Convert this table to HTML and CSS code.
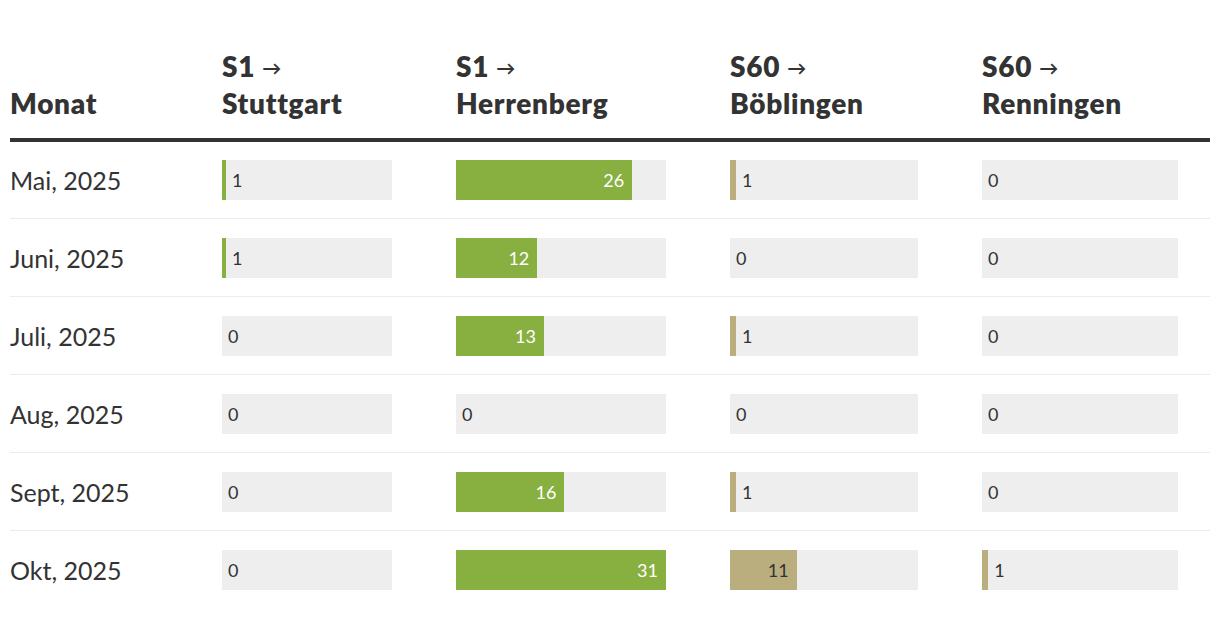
FILE: index.html
```html
<!DOCTYPE html>
<html lang="de">
<head>
<meta charset="utf-8">
<title>S-Bahn Störungen</title>
<link rel="stylesheet" href="styles.css">
</head>
<body>
<div class="wrap">
  <div class="grid">
    <div class="hcell"><div>Monat</div></div>
    <div class="hcell"><div>S1 <span class="arr">→</span><br>Stuttgart</div></div>
    <div class="hcell"><div>S1 <span class="arr">→</span><br>Herrenberg</div></div>
    <div class="hcell"><div>S60 <span class="arr">→</span><br>Böblingen</div></div>
    <div class="hcell"><div>S60 <span class="arr">→</span><br>Renningen</div></div>

    <div class="cell first month">Mai, 2025</div>
    <div class="cell first"><div class="track w170"><div class="fill green" style="width:2.4%"></div><span class="lbl">1</span></div></div>
    <div class="cell first"><div class="track w210"><div class="fill green" style="width:83.9%"><span class="lbl in">26</span></div></div></div>
    <div class="cell first"><div class="track w188"><div class="fill tan" style="width:3.2%"></div><span class="lbl">1</span></div></div>
    <div class="cell first"><div class="track w196"><span class="lbl">0</span></div></div>

    <div class="cell month">Juni, 2025</div>
    <div class="cell"><div class="track w170"><div class="fill green" style="width:2.4%"></div><span class="lbl">1</span></div></div>
    <div class="cell"><div class="track w210"><div class="fill green" style="width:38.7%"><span class="lbl in">12</span></div></div></div>
    <div class="cell"><div class="track w188"><span class="lbl">0</span></div></div>
    <div class="cell"><div class="track w196"><span class="lbl">0</span></div></div>

    <div class="cell month">Juli, 2025</div>
    <div class="cell"><div class="track w170"><span class="lbl">0</span></div></div>
    <div class="cell"><div class="track w210"><div class="fill green" style="width:41.9%"><span class="lbl in">13</span></div></div></div>
    <div class="cell"><div class="track w188"><div class="fill tan" style="width:3.2%"></div><span class="lbl">1</span></div></div>
    <div class="cell"><div class="track w196"><span class="lbl">0</span></div></div>

    <div class="cell month">Aug, 2025</div>
    <div class="cell"><div class="track w170"><span class="lbl">0</span></div></div>
    <div class="cell"><div class="track w210"><span class="lbl">0</span></div></div>
    <div class="cell"><div class="track w188"><span class="lbl">0</span></div></div>
    <div class="cell"><div class="track w196"><span class="lbl">0</span></div></div>

    <div class="cell month">Sept, 2025</div>
    <div class="cell"><div class="track w170"><span class="lbl">0</span></div></div>
    <div class="cell"><div class="track w210"><div class="fill green" style="width:51.6%"><span class="lbl in">16</span></div></div></div>
    <div class="cell"><div class="track w188"><div class="fill tan" style="width:3.2%"></div><span class="lbl">1</span></div></div>
    <div class="cell"><div class="track w196"><span class="lbl">0</span></div></div>

    <div class="cell month last">Okt, 2025</div>
    <div class="cell last"><div class="track w170"><span class="lbl">0</span></div></div>
    <div class="cell last"><div class="track w210"><div class="fill green" style="width:100%"><span class="lbl in">31</span></div></div></div>
    <div class="cell last"><div class="track w188"><div class="fill tan" style="width:35.5%"><span class="lbl in dark">11</span></div></div></div>
    <div class="cell last"><div class="track w196"><div class="fill tan" style="width:3.2%"></div><span class="lbl">1</span></div></div>
  </div>
</div>
</body>
</html>
```

FILE: styles.css
```css
html, body {
  margin: 0;
  padding: 0;
  background: #ffffff;
}
body {
  font-family: Lato, "Liberation Sans", sans-serif;
  color: #333333;
}
.wrap {
  padding: 0 10px;
}
.grid {
  display: grid;
  grid-template-columns: 212px 234px 274px 252px 228px;
}
.hcell {
  font-weight: 800;
  font-size: 28px;
  letter-spacing: 0.7px;
  line-height: 37px;
  padding-top: 48px;
  padding-bottom: 16px;
  border-bottom: 4px solid #333333;
  display: flex;
  align-items: flex-end;
}
.hcell .arr {
  font-size: 19px;
  font-weight: 700;
  letter-spacing: 0;
  line-height: 1;
  position: relative;
  top: -2px;
}
.cell {
  height: 77px;
  border-bottom: 1px solid #ececec;
  display: flex;
  align-items: center;
}
.cell.first {
  height: 76px;
}
.cell.last {
  border-bottom: none;
}
.month {
  font-size: 25px;
}
.track {
  height: 40px;
  background: #eeeeee;
  display: flex;
  align-items: center;
}
.w170 { width: 170px; }
.w210 { width: 210px; }
.w188 { width: 188px; }
.w196 { width: 196px; }
.fill {
  height: 100%;
  display: flex;
  align-items: center;
  justify-content: flex-end;
}
.green { background: #87b040; }
.tan { background: #bbae7e; }
.lbl {
  font-size: 18px;
  padding-left: 6px;
  color: #333333;
}
.lbl.in {
  padding-left: 0;
  padding-right: 8px;
  color: #ffffff;
}
.lbl.in.dark {
  color: #333333;
}
```
